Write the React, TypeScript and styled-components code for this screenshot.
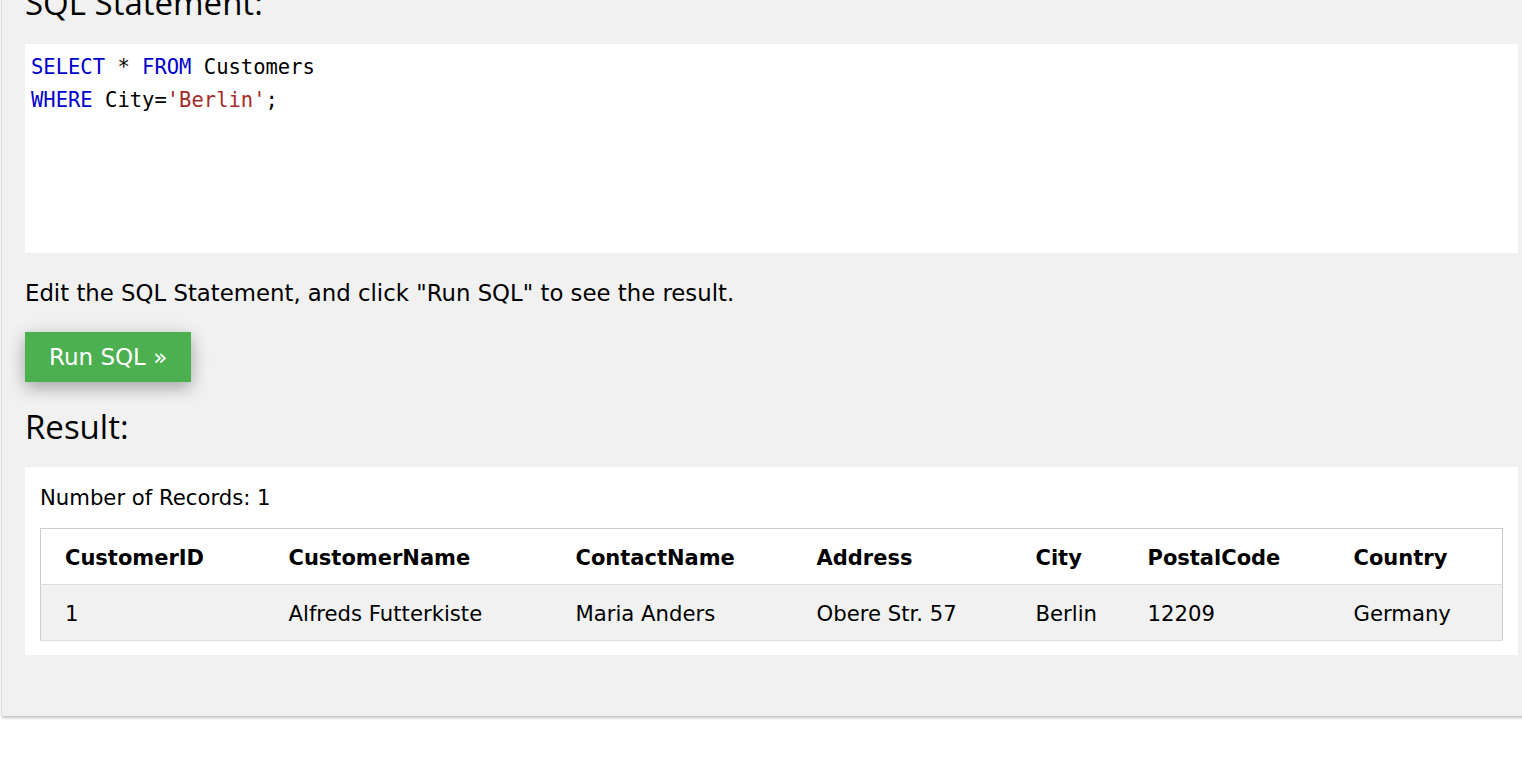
import React from "react"
import styled, { createGlobalStyle } from "styled-components"

const GlobalStyle = createGlobalStyle`
  html, body {
    margin: 0;
    padding: 0;
    background: #ffffff;
    overflow: hidden;
  }
  body {
    font-family: "DejaVu Sans", Verdana, sans-serif;
    color: #000000;
  }
`

const Page = styled.div`
  padding-left: 2px;
  height: 761px;
`

const Panel = styled.div`
  margin-top: -20px;
  width: 1539px;
  box-sizing: border-box;
  padding: 0 23px 61px 23px;
  background: #f1f1f1;
  box-shadow: 0 2px 3px rgba(0, 0, 0, 0.22), 0 0 2px rgba(0, 0, 0, 0.15);
`

const Heading = styled.h3<{ $gap: number }>`
  margin: 0 0 ${p => p.$gap}px 0;
  height: 45px;
  line-height: 45px;
  font-family: "Segoe UI", "Open Sans", "Noto Sans", sans-serif;
  font-weight: 400;
  font-size: 33px;
  color: #000000;
`

const CodeBox = styled.div`
  height: 209px;
  box-sizing: border-box;
  background: #ffffff;
  padding: 7px 6px 5px 6px;
  font-family: "DejaVu Sans Mono", "Liberation Mono", monospace;
  font-size: 20.5px;
  line-height: 33px;
  white-space: pre;
`

const Keyword = styled.span`
  color: #0000cd;
`

const Str = styled.span`
  color: #a52a2a;
`

const Hint = styled.p`
  margin: 25px 0 24px 0;
  font-size: 22.8px;
  line-height: 30px;
`

const RunButton = styled.button`
  display: block;
  height: 50px;
  padding: 0 24px;
  border: none;
  background: #4caf50;
  color: #ffffff;
  font-family: "DejaVu Sans", Verdana, sans-serif;
  font-size: 23px;
  box-shadow: 0 6px 15px rgba(0, 0, 0, 0.22), 0 4px 20px rgba(0, 0, 0, 0.12);
  margin-bottom: 22px;
  cursor: pointer;
`

const ResultBox = styled.div`
  background: #ffffff;
  padding: 16px 15px 14px 15px;
`

const Count = styled.div`
  font-size: 21.2px;
  line-height: 30px;
  margin-bottom: 15px;
`

const Table = styled.table`
  width: 100%;
  border-collapse: collapse;
  table-layout: fixed;
  border: 1px solid #cccccc;
  font-size: 21.2px;
`

const Row = styled.tr<{ $shade?: boolean }>`
  background: ${p => (p.$shade ? "#f1f1f1" : "#ffffff")};
  border-bottom: 1px solid #dddddd;
`

const Th = styled.th`
  text-align: left;
  font-weight: 700;
  font-size: 21px;
  height: 53px;
  padding: 2px 12px 0 12px;
  &:first-child {
    padding-left: 24px;
  }
`

const Td = styled.td`
  height: 53px;
  padding: 2px 12px 0 12px;
  &:first-child {
    padding-left: 24px;
  }
`

const columns = [
  { name: "CustomerID", width: 236 },
  { name: "CustomerName", width: 287 },
  { name: "ContactName", width: 241 },
  { name: "Address", width: 219 },
  { name: "City", width: 112 },
  { name: "PostalCode", width: 206 },
  { name: "Country", width: 161 },
]

const rows = [
  ["1", "Alfreds Futterkiste", "Maria Anders", "Obere Str. 57", "Berlin", "12209", "Germany"],
]

function App() {
  return (
    <Page>
      <GlobalStyle />
      <Panel>
        <Heading $gap={19}>SQL Statement:</Heading>
        <CodeBox>
          <Keyword>SELECT</Keyword> * <Keyword>FROM</Keyword> Customers{"\n"}
          <Keyword>WHERE</Keyword> City=<Str>'Berlin'</Str>;
        </CodeBox>
        <Hint>Edit the SQL Statement, and click "Run SQL" to see the result.</Hint>
        <RunButton>Run SQL »</RunButton>
        <Heading $gap={18}>Result:</Heading>
        <ResultBox>
          <Count>Number of Records: 1</Count>
          <Table>
            <colgroup>
              {columns.map(c => (
                <col key={c.name} style={{ width: c.width }} />
              ))}
            </colgroup>
            <thead>
              <Row>
                {columns.map(c => (
                  <Th key={c.name}>{c.name}</Th>
                ))}
              </Row>
            </thead>
            <tbody>
              {rows.map((r, i) => (
                <Row key={i} $shade>
                  {r.map((v, j) => (
                    <Td key={j}>{v}</Td>
                  ))}
                </Row>
              ))}
            </tbody>
          </Table>
        </ResultBox>
      </Panel>
    </Page>
  )
}

export default App
